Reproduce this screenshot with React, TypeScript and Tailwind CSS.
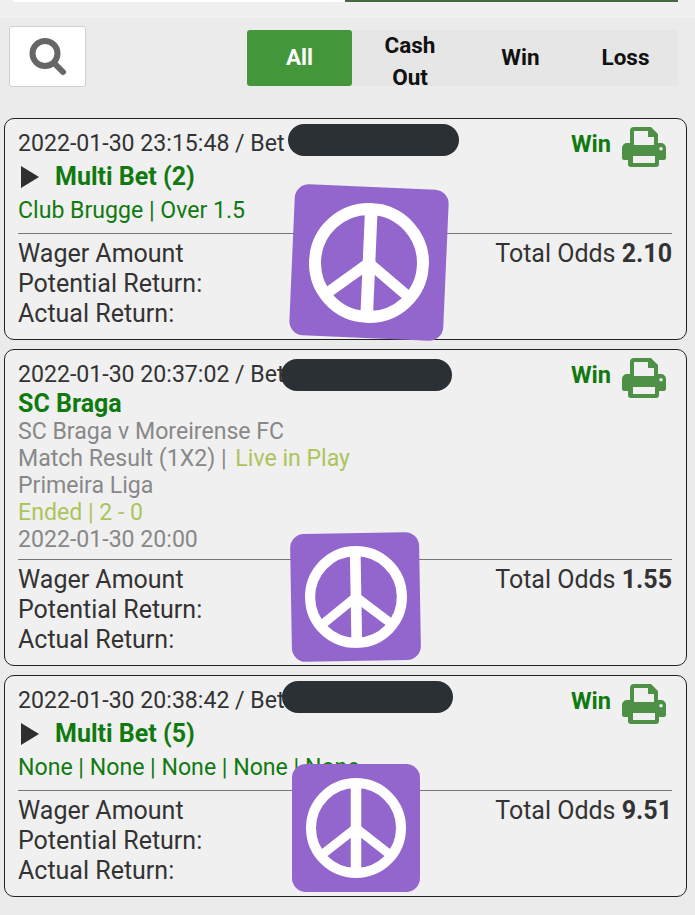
import type { ReactNode } from "react";

const PeaceSticker = ({ className, size }: { className: string; size: number }) => (
    <div className={`absolute bg-[#9266cc] rounded-[14px] flex items-center justify-center ${className}`}>
        <svg width={size} height={size} viewBox="0 0 100 100" fill="none" stroke="#fff" strokeWidth="10">
            <circle cx="50" cy="50" r="45" />
            <path d="M50 5V95" strokeWidth="10.5" />
            <path d="M50 50L13 79M50 50L87 79" strokeWidth="9" />
        </svg>
    </div>
);

const PrintIcon = () => (
    <svg width="44" height="40" viewBox="0 0 44 40" fill="#4e9146" className="-mt-[2px] shrink-0">
        <path
            fillRule="evenodd"
            d="M8 16V4a4 4 0 0 1 4-4h17l7 7v9h3a5 5 0 0 1 5 5v10a2 2 0 0 1-2 2h-5v4a3 3 0 0 1-3 3H9a3 3 0 0 1-3-3v-4H2a2 2 0 0 1-2-2V21a5 5 0 0 1 5-5h3Zm4-12v14h20V10h-6V4H12Zm-1 25v7h22v-7H11Zm28-9a1.8 1.8 0 1 0 0 3.6 1.8 1.8 0 0 0 0-3.6Z"
        />
    </svg>
);

const Play = () => (
    <svg width="18" height="22" viewBox="0 0 18 22" fill="#2f2f2f" className="shrink-0">
        <path d="M0 0L18 11L0 22Z" />
    </svg>
);

function BetCard({ date, children, odds, className, hrClass }: { date: string; children: ReactNode; odds: string; className: string; hrClass: string }) {
    return (
        <div className={`relative mx-1 w-[683px] rounded-[10px] border border-[#222] bg-[#f0f0f0] pl-[13px] pr-[14px] ${className}`}>
            <div className="flex h-[30px] items-start justify-between mt-2.5">
                <span className="text-[23.1px] leading-[30px] text-[#333]">{date}</span>
                <div className="flex items-start gap-[11px] pr-[6px]">
                    <span className="text-[23.6px] leading-[30px] font-bold text-[#107a10]">Win</span>
                    <PrintIcon />
                </div>
            </div>
            <div className="pt-[10px]">{children}</div>
            <div className={`border-t border-[#777] ${hrClass}`} />
            <div className="flex justify-between pt-[5px] text-[25px] leading-[30px] text-[#333]">
                <div>
                    <div>Wager Amount</div>
                    <div>Potential Return:</div>
                    <div>Actual Return:</div>
                </div>
                <div>
                    Total Odds <b>{odds}</b>
                </div>
            </div>
        </div>
    );
}

function MultiHead({ title, legs }: { title: string; legs: string }) {
    return (
        <>
            <div className="flex h-[33px] items-center gap-4 -mt-[9px]">
                <div className="pl-[3px] pt-px">
                    <Play />
                </div>
                <span className="text-[25px] leading-[33px] font-bold text-[#107a10]">{title}</span>
            </div>
            <div className="mt-[1px] h-[34px] text-[23.1px] leading-[34px] whitespace-nowrap text-[#107a10]">{legs}</div>
        </>
    );
}

export default function App() {
    return (
        <div className="relative h-[915px] w-[695px] overflow-hidden bg-[#ebebeb] font-['Roboto',sans-serif]">
            <div className="h-[18px] bg-[#f0f0f0]">
                <div className="flex pl-[13px] pr-[17px]">
                    <div className="h-[2px] w-[332px] bg-white" />
                    <div className="h-[2px] flex-1 bg-[#47693f]" />
                </div>
            </div>

            <div className="flex h-[69px] items-start justify-between pt-2 pl-[9px] pr-[17px]">
                <button className="flex h-[61px] w-[77px] items-center justify-center rounded-[3px] border border-[#d0d0d0] bg-white">
                    <svg width="40" height="40" viewBox="0 0 40 40" fill="none" stroke="#666" strokeLinecap="round">
                        <circle cx="17" cy="16.5" r="12.5" strokeWidth="6" />
                        <path d="M26 26L35 35" strokeWidth="6" />
                    </svg>
                </button>
                <div className="mt-1 grid h-14 w-[431px] grid-cols-[105px_116px_105px_105px] grid-rows-[56px] rounded-[3px] bg-[#e6e6e6] text-center text-[22.5px] leading-[32px] font-bold text-[#111]">
                    <div className="flex items-center justify-center rounded-[3px] bg-[#43963a] pb-[2px] text-white">All</div>
                    <div className="-mt-[1px]">
                        Cash
                        <br />
                        Out
                    </div>
                    <div className="flex items-center justify-center pb-[2px]">Win</div>
                    <div className="flex items-center justify-center pb-[2px]">Loss</div>
                </div>
            </div>

            <div className="mt-[31px] flex flex-col gap-[9px]">
                <BetCard date="2022-01-30 23:15:48 / Bet" odds="2.10" className="h-[222px]" hrClass="mt-[5px]">
                    <MultiHead title="Multi Bet (2)" legs="Club Brugge | Over 1.5" />
                </BetCard>

                <BetCard date="2022-01-30 20:37:02 / Bet" odds="1.55" className="h-[317px]" hrClass="mt-[6px]">
                    <div className="-mt-[10px] text-[25px] leading-[27px] font-bold text-[#107a10]">SC Braga</div>
                    <div className="mt-[1px] text-[23.1px] leading-[27px] text-[#888]">
                        <div>SC Braga v Moreirense FC</div>
                        <div>
                            Match Result (1X2) | <span className="ml-[3px] text-[#adc45c]">Live in Play</span>
                        </div>
                        <div>Primeira Liga</div>
                        <div className="text-[#adc45c]">Ended | 2 - 0</div>
                        <div>2022-01-30 20:00</div>
                    </div>
                </BetCard>

                <BetCard date="2022-01-30 20:38:42 / Bet" odds="9.51" className="h-[222px]" hrClass="mt-[5px]">
                    <MultiHead title="Multi Bet (5)" legs="None | None | None | None | None" />
                </BetCard>
            </div>

            {/* scribbled-out bet numbers and stickers on top of the screenshot */}
            <div className="absolute top-[124px] left-[288px] h-8 w-[171px] rounded-2xl bg-[#2b3034]" />
            <div className="absolute top-[359px] left-[281px] h-8 w-[171px] rounded-2xl bg-[#2b3034]" />
            <div className="absolute top-[681px] left-[282px] h-8 w-[171px] rounded-2xl bg-[#2b3034]" />

            <PeaceSticker className="top-[187px] left-[292px] h-[151px] w-[154px] rotate-[2.5deg]" size={120} />
            <PeaceSticker className="top-[533px] left-[291px] h-[128px] w-[129px] -rotate-1" size={102} />
            <PeaceSticker className="top-[764px] left-[292px] h-[128px] w-[128px]" size={100} />
        </div>
    );
}
